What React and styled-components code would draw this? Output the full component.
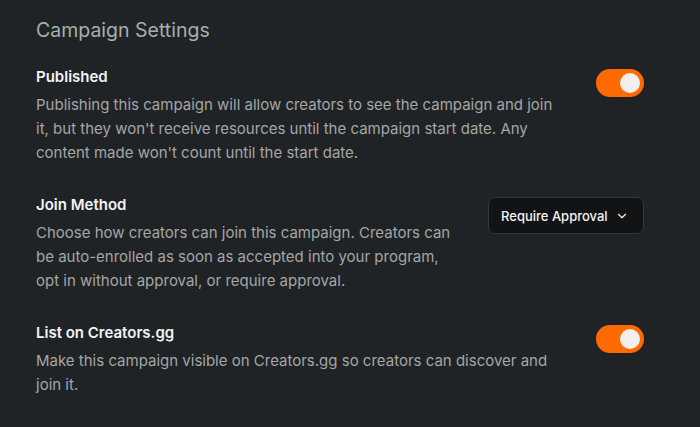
import React from 'react'
import styled, { createGlobalStyle } from 'styled-components'
import { ChevronDown } from 'lucide-react'

const Global = createGlobalStyle`
    body {
        margin: 0;
        background: #202325;
        font-family: Inter, "Noto Sans", sans-serif;
    }
`;

function Toggle({ on }) {
  return (
    <Track $on={on}>
      <Knob />
    </Track>
  );
}

function SettingRow({ title, children, control }) {
  return (
    <Row>
      <TextCol>
        <Title>{title}</Title>
        <Desc>{children}</Desc>
      </TextCol>
      <Control>{control}</Control>
    </Row>
  );
}

export default function App() {
  return (
    <>
      <Global />
      <Page>
        <Heading>Campaign Settings</Heading>
        <List>
          <SettingRow title="Published" control={<Toggle on />}>
            Publishing this campaign will allow creators to see the campaign and join it, but they won't receive resources until the campaign start date. Any content made won't count until the start date.
          </SettingRow>

          <SettingRow
            title="Join Method"
            control={
              <Select>
                Require Approval
                <ChevronDown size={14} strokeWidth={2} />
              </Select>
            }
          >
            Choose how creators can join this campaign. Creators can be auto-enrolled as soon as accepted into your program, opt in without approval, or require approval.
          </SettingRow>

          <SettingRow title="List on Creators.gg" control={<Toggle on />}>
            Make this campaign visible on Creators.gg so creators can discover and join it.
          </SettingRow>
        </List>
      </Page>
    </>
  );
}

const Page = styled.div`
    width: 700px;
    height: 427px;
    box-sizing: border-box;
    padding: 16px 56px 0 36px;
    background: #202325;
`;

const Heading = styled.h2`
    margin: 0 0 21px;
    font-size: 19.5px;
    line-height: 28px;
    font-weight: 400;
    color: #a2b1aa;
`;

const List = styled.div`
    display: flex;
    flex-direction: column;
    gap: 28px;
`;

const Row = styled.div`
    display: flex;
    justify-content: space-between;
    gap: 32px;
`;

const TextCol = styled.div`
    flex: 1;
    max-width: 520px;
`;

const Title = styled.div`
    font-size: 15px;
    line-height: 24px;
    font-weight: 600;
    color: #f3f3f3;
    margin-bottom: 4px;
`;

const Desc = styled.p`
    margin: 0;
    font-size: 15px;
    line-height: 24px;
    color: #a4a6a7;
`;

const Control = styled.div`
    flex-shrink: 0;
    padding-top: 4px;
`;

const Track = styled.div`
    width: 48px;
    height: 28px;
    box-sizing: border-box;
    border-radius: 14px;
    padding: 4px;
    display: flex;
    justify-content: ${p => (p.$on ? 'flex-end' : 'flex-start')};
    background: ${p => (p.$on ? '#ff6a00' : '#3a3d40')};
`;

const Knob = styled.div`
    width: 20px;
    height: 20px;
    border-radius: 50%;
    background: #f1efed;
`;

const Select = styled.div`
    width: 156px;
    height: 37px;
    box-sizing: border-box;
    display: flex;
    align-items: center;
    justify-content: space-between;
    padding: 0 14px 0 12px;
    background: #111314;
    border: 1px solid #34373a;
    border-radius: 7px;
    color: #f3f3f3;
    font-size: 13px;
    font-weight: 500;
    white-space: nowrap;
`;
